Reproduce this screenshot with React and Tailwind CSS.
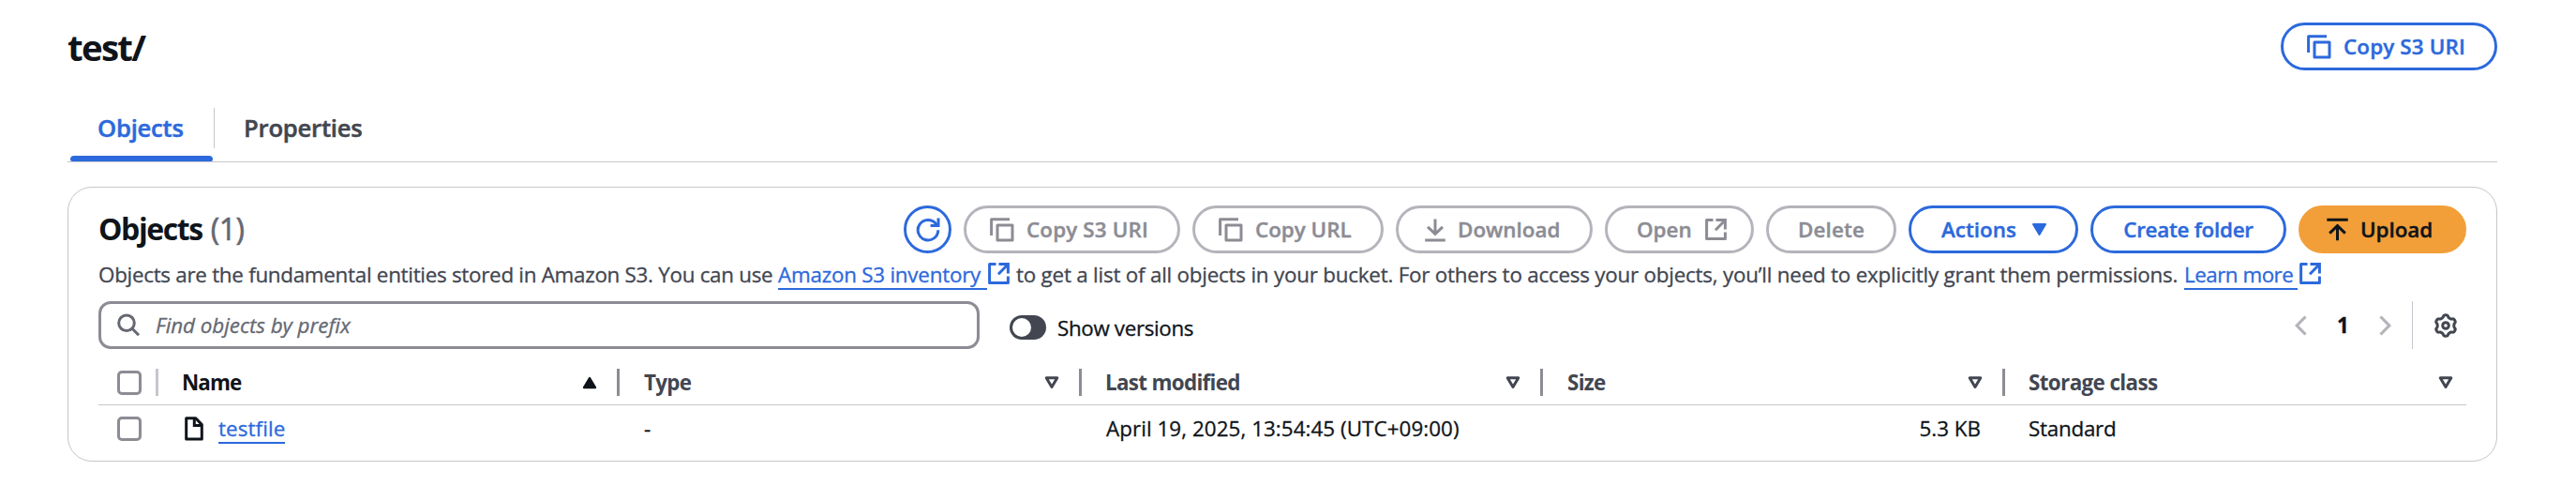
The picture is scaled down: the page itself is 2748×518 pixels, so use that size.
const svgBase = {
  fill: "none",
  stroke: "currentColor",
  strokeWidth: 3,
  "aria-hidden": true,
};

function CopyIcon() {
  return (
    <svg {...svgBase} width="26" height="26" viewBox="0 0 26 26" className="shrink-0">
      <path d="M1.6 19V1.8H21" strokeLinejoin="round" />
      <rect x="8" y="8" width="16" height="16" strokeLinejoin="round" />
    </svg>
  );
}

function ExternalIcon() {
  return (
    <svg {...svgBase} width="23" height="23" viewBox="0 0 23 23" className="shrink-0">
      <path d="M8.5 1.6H1.6V21.4H21.4V14.5" strokeLinejoin="round" />
      <path d="M11.5 1.6H21.4V11.5M21 2L11 12.2" />
    </svg>
  );
}

function RefreshIcon() {
  return (
    <svg {...svgBase} width="26" height="26" viewBox="0 0 26 26" className="shrink-0">
      <path d="M23.8 13.2A10.8 10.8 0 1 1 21.4 6.4L23 8.2" />
      <path d="M24 0.4V8.4H15.6" />
    </svg>
  );
}

function DownloadIcon() {
  return (
    <svg {...svgBase} width="22" height="26" viewBox="0 0 22 26" className="shrink-0">
      <path d="M11 1.5V17M3 9.8L11 17.4L19 9.8M0.2 24H21.8" />
    </svg>
  );
}

function UploadIcon() {
  return (
    <svg {...svgBase} width="23" height="26" viewBox="0 0 23 26" className="shrink-0">
      <path d="M11.5 24.3V9M3.2 16.6L11.5 8.6L19.8 16.6M0.3 2.3H22.7" />
    </svg>
  );
}

function CaretDown() {
  return (
    <svg width="17" height="15" viewBox="0 0 17 15" fill="currentColor" aria-hidden="true" className="shrink-0">
      <path d="M2 2H15L8.5 13Z" stroke="currentColor" strokeWidth="2" strokeLinejoin="round" />
    </svg>
  );
}

function SortIcon({ active }) {
  return active ? (
    <svg width="16" height="14" viewBox="0 0 16 14" className="shrink-0 text-[#0f141a]" aria-hidden="true">
      <path d="M2 12H14L8 2Z" fill="currentColor" stroke="currentColor" strokeWidth="2.4" strokeLinejoin="round" />
    </svg>
  ) : (
    <svg {...svgBase} width="16" height="14" viewBox="0 0 16 14" className="shrink-0">
      <path d="M2.2 1.7H13.8L8 11.4Z" strokeLinejoin="round" />
    </svg>
  );
}

function SearchIcon() {
  return (
    <svg {...svgBase} width="25" height="25" viewBox="0 0 25 25" className="shrink-0 text-[#656871]">
      <circle cx="10" cy="10.3" r="8.3" />
      <path d="M15.8 16L23 23.2" />
    </svg>
  );
}

function FileIcon() {
  return (
    <svg {...svgBase} width="20" height="26" viewBox="0 0 20 26" className="shrink-0">
      <path d="M1.7 1.8H11.8L18.3 8.6V24H1.7Z" strokeLinejoin="round" />
      <path d="M10.3 2V9.4H18" />
    </svg>
  );
}

function Chevron({ flip }) {
  return (
    <svg {...svgBase} width="13" height="22" viewBox="0 0 13 22" className="shrink-0 text-[#b4b4bb]">
      <path d={flip ? "M1.5 1.5L10.8 11L1.5 20.5" : "M11.5 1.5L2.2 11L11.5 20.5"} strokeWidth="3.2" />
    </svg>
  );
}

const gearOutline =
  Array.from({ length: 121 }, (_, i) => {
    const a = (i / 120) * Math.PI * 2;
    const r = 10 + 1.2 * Math.tanh(2 * Math.cos(6 * a));
    return `${i ? "L" : "M"}${(13 + r * Math.sin(a)).toFixed(2)} ${(13 - r * Math.cos(a)).toFixed(2)}`;
  }).join("") + "Z";

function GearIcon() {
  return (
    <svg {...svgBase} width="26" height="26" viewBox="0 0 26 26" className="shrink-0 text-[#424650]">
      <path d={gearOutline} strokeLinejoin="round" />
      <circle cx="13" cy="13" r="3.3" />
    </svg>
  );
}

function Button({ children, className }) {
  return (
    <button
      className={`flex h-[51px] shrink-0 items-center rounded-full border-[3px] text-[22.4px] leading-[32px] font-semibold whitespace-nowrap [-webkit-text-stroke:0.4px] ${className}`}
    >
      {children}
    </button>
  );
}

const disabled = "border-[#b4b4bb] text-[#8c8c94]";
const primary = "border-[#2c69dc] text-[#2c69dc]";

function Checkbox() {
  return <span className="block h-[26px] w-[26px] rounded-[5px] border-[3px] border-[#8c8c94]" />;
}

function HeaderCell({ label, active, last, className }) {
  return (
    <div
      className={`flex items-center justify-between pl-[25px] ${active ? "text-[#0f141a]" : "text-[#424650]"} ${last ? "pr-[14px]" : ""}`}
    >
      <span className={`font-bold [-webkit-text-stroke:0px] ${className}`}>{label}</span>
      <span className="flex items-center">
        <SortIcon active={active} />
        {!last && <span className="ml-[21px] h-[29px] w-[3px] bg-[#8c8c94]" />}
      </span>
    </div>
  );
}

const columns = "grid grid-cols-[64px_492px_493px_492px_493px_492px]";
const link = "block h-[33px] border-b-2 border-[#2c69dc] leading-[33px] text-[#2c69dc]";

export default function App() {
  return (
    <div className="h-[518px] w-[2748px] overflow-hidden bg-white pt-[24px] pr-[84px] pl-[72px] font-['Open_Sans',sans-serif] text-[22.4px] leading-[33px] text-[#0f141a] [-webkit-text-stroke:0.3px]">
      <header className="flex h-[51px] items-center justify-between">
        <h1 className="text-[38.4px] leading-[48px] font-bold tracking-[-1.7px] [-webkit-text-stroke:0px]">test/</h1>
        <Button className={`w-[231px] gap-[13px] pl-[25px] tracking-[0.15px] ${primary}`}>
          <CopyIcon />
          Copy S3 URI
        </Button>
      </header>

      <nav className="mt-[25px] flex h-[73px] items-center border-b border-[#c6c6cd] text-[25.6px] font-semibold [-webkit-text-stroke:0.5px]">
        <div className="relative flex h-full w-[156px] items-center pl-[32px] text-[#2c69dc]">
          <span className="tracking-[-0.22px]">Objects</span>
          <span className="absolute bottom-0 left-[3px] h-[6px] w-[152px] rounded-t-[4px] rounded-b-[2px] bg-[#2c69dc]" />
        </div>
        <span className="h-[43px] w-px bg-[#c6c6cd]" />
        <span className="pl-[31px] tracking-[-0.2px] text-[#424650]">Properties</span>
      </nav>

      <section className="mt-[26px] h-[293px] rounded-[26px] border border-[#c6c6cd] px-[32px] pt-[19px]">
        <div className="flex h-[51px] items-center justify-between">
          <h2 className="mt-[-2px] flex text-[32px] leading-[40px]">
            <span className="font-bold tracking-[-1.4px] [-webkit-text-stroke:0px]">Objects</span>
            <span className="ml-[9px] tracking-[-0.6px] text-[#656871] [-webkit-text-stroke:0.6px]">(1)</span>
          </h2>
          <div className="flex gap-[13px]">
            <Button className={`w-[51px] justify-center ${primary}`}>
              <RefreshIcon />
            </Button>
            <Button className={`w-[231px] gap-[13px] pl-[25px] tracking-[0.15px] ${disabled}`}>
              <CopyIcon />
              Copy S3 URI
            </Button>
            <Button className={`w-[204px] gap-[13px] pl-[25px] ${disabled}`}>
              <CopyIcon />
              Copy URL
            </Button>
            <Button className={`w-[210px] gap-[13px] pl-[28px] ${disabled}`}>
              <DownloadIcon />
              Download
            </Button>
            <Button className={`w-[159px] gap-[14px] pl-[31px] ${disabled}`}>
              Open
              <ExternalIcon />
            </Button>
            <Button className={`w-[139px] justify-center tracking-[0.14px] ${disabled}`}>Delete</Button>
            <Button className={`w-[181px] gap-[16px] pl-[32px] ${primary}`}>
              Actions
              <CaretDown />
            </Button>
            <Button className={`w-[209px] justify-center tracking-[-0.26px] ${primary}`}>Create folder</Button>
            <Button className="w-[179px] gap-[13px] border-[#f29f39] bg-[#f29f39] pl-[27px] text-[#0f141a]">
              <UploadIcon />
              <span className="tracking-[-0.05px]">Upload</span>
            </Button>
          </div>
        </div>

        <p className="mt-[6px] flex h-[33px] items-start whitespace-nowrap text-[#424650]">
          <span className="w-[725px] tracking-[-0.28px]">
            Objects are the fundamental entities stored in Amazon S3. You can use
          </span>
          <a className={`w-[223px] tracking-[-0.23px] ${link}`}>Amazon S3 inventory</a>
          <span className="mt-[4px] ml-[1px] w-[30px] text-[#2c69dc]">
            <ExternalIcon />
          </span>
          <span className="w-[1246px] tracking-[-0.22px]">
            to get a list of all objects in your bucket. For others to access your objects, you’ll need to explicitly grant them permissions.
          </span>
          <a className={`w-[121px] tracking-[-0.5px] ${link}`}>Learn more</a>
          <span className="mt-[4px] ml-[2px] text-[#2c69dc]">
            <ExternalIcon />
          </span>
        </p>

        <div className="mt-[12px] flex h-[51px] items-center">
          <div className="flex h-full w-[940px] items-center gap-[16px] rounded-[13px] border-[3px] border-[#8c8c94] pl-[17px]">
            <SearchIcon />
            <span className="tracking-[-0.05px] text-[#656871] italic">Find objects by prefix</span>
          </div>
          <span className="mt-[5px] ml-[32px] flex h-[26px] w-[39px] items-center rounded-full bg-[#424650] pl-[3px]">
            <span className="h-[20px] w-[20px] rounded-full bg-white" />
          </span>
          <span className="mt-[5px] ml-[12px] tracking-[-0.36px]">Show versions</span>
          <div className="ml-auto flex h-full items-center">
            <Chevron />
            <span className="mx-[32px] w-[13px] font-bold">1</span>
            <Chevron flip />
            <span className="ml-[22px] h-full w-px bg-[#c6c6cd]" />
            <span className="mr-[9px] ml-[22px]">
              <GearIcon />
            </span>
          </div>
        </div>

        <div className="mt-[12px]">
          <div className={`${columns} h-[48px] items-center border-b border-[#c6c6cd]`}>
            <div className="flex items-center justify-between pl-[20px]">
              <Checkbox />
              <span className="h-[29px] w-[3px] bg-[#c6c6cd]" />
            </div>
            <HeaderCell label="Name" active className="tracking-[-0.9px]" />
            <HeaderCell label="Type" className="pl-px tracking-[-0.7px]" />
            <HeaderCell label="Last modified" className="tracking-[-0.68px]" />
            <HeaderCell label="Size" className="pl-px tracking-[-0.7px]" />
            <HeaderCell label="Storage class" last className="tracking-[-0.61px]" />
          </div>
          <div className={`${columns} h-[49px] items-center`}>
            <div className="pl-[20px]">
              <Checkbox />
            </div>
            <div className="flex items-center pl-[28px]">
              <FileIcon />
              <a className={`ml-[16px] w-[71px] tracking-[0.1px] ${link}`}>testfile</a>
            </div>
            <div className="pl-[26px]">-</div>
            <div className="pl-[26px] tracking-[0.06px]">April 19, 2025, 13:54:45 (UTC+09:00)</div>
            <div className="pr-[26px] text-right">5.3 KB</div>
            <div className="pl-[25px] tracking-[-0.25px]">Standard</div>
          </div>
        </div>
      </section>
    </div>
  );
}
